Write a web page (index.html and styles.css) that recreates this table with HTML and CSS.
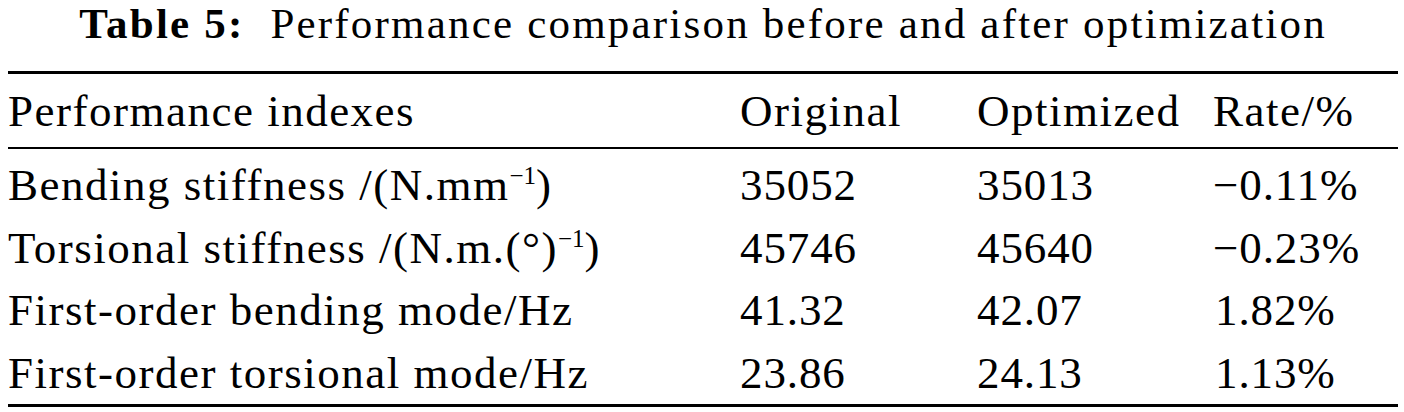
FILE: index.html
```
<!DOCTYPE html>
<html lang="en">

<head>
    <meta charset="UTF-8">
    <title>Table 5</title>
    <link rel="stylesheet" href="styles.css">
</head>

<body>

    <table class="tabel">
        <caption><b>Table 5:</b>&nbsp; Performance comparison before and after optimization</caption>
        <thead>
            <tr>
                <th class="navn">Performance indexes</th>
                <th>Original</th>
                <th>Optimized</th>
                <th>Rate/%</th>
            </tr>
        </thead>
        <tbody>
            <tr class="first">
                <td class="navn">Bending stiffness /(N.mm<sup>&minus;1</sup>)</td>
                <td class="tal">35052</td>
                <td class="tal">35013</td>
                <td class="tal">&minus;0.11%</td>
            </tr>
            <tr>
                <td class="navn">Torsional stiffness /(N.m.(&deg;)<sup>&minus;1</sup>)</td>
                <td class="tal">45746</td>
                <td class="tal">45640</td>
                <td class="tal">&minus;0.23%</td>
            </tr>
            <tr>
                <td class="navn">First-order bending mode/Hz</td>
                <td class="tal">41.32</td>
                <td class="tal">42.07</td>
                <td class="tal pos">1.82%</td>
            </tr>
            <tr class="last">
                <td class="navn">First-order torsional mode/Hz</td>
                <td class="tal">23.86</td>
                <td class="tal">24.13</td>
                <td class="tal pos">1.13%</td>
            </tr>
        </tbody>
    </table>

</body>

</html>
```

FILE: styles.css
```
body {
    margin: 0;
    background-color: white;
    color: black;
    font-family: "Liberation Serif", "Times New Roman", serif;
}

.tabel {
    width: 1390px;
    margin-left: 8px;
    border-collapse: separate;
    border-spacing: 0;
    font-size: 45px;
    letter-spacing: 1.5px;
}

caption {
    height: 48px;
    padding-bottom: 23px;
    line-height: 48px;
    text-align: center;
    font-size: 43px;
    letter-spacing: 2.2px;
    white-space: nowrap;
}

th {
    font-weight: normal;
    text-align: left;
    padding: 6px 0 4px;
    line-height: 63px;
    border-top: 3px solid black;
    border-bottom: 2px solid black;
}

td {
    padding: 0;
    line-height: 62.5px;
    white-space: nowrap;
}

.tal {
    letter-spacing: 0.9px;
}

tr.first td {
    padding-top: 5px;
}

tr.last td {
    border-bottom: 3px solid black;
}

.navn {
    width: 732px;
}

th:nth-child(2),
td:nth-child(2) {
    width: 237px;
}

th:nth-child(3),
td:nth-child(3) {
    width: 236px;
}

.pos {
    padding-left: 2px;
}

sup {
    font-size: 25px;
    vertical-align: 16px;
    line-height: 0;
    letter-spacing: 0;
}
```
